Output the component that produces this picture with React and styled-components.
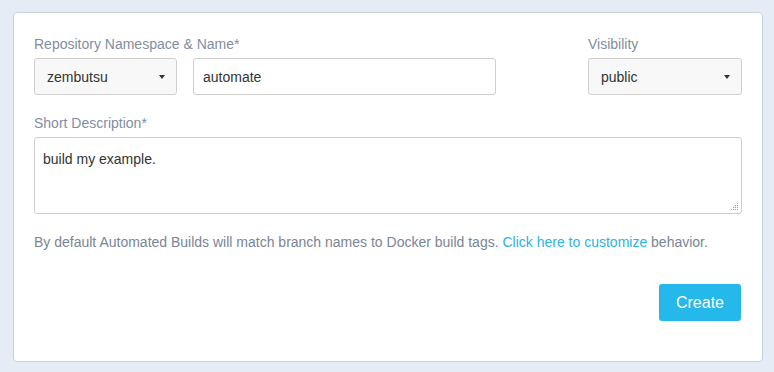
import React from 'react'
import styled, {createGlobalStyle} from 'styled-components'

const GlobalStyle = createGlobalStyle`
  html, body {
    margin: 0;
    background: #e6ecf5;
    font-family: "Liberation Sans", Arial, sans-serif;
  }
`

const Page = styled.div`
  padding: 12px 11px 10px 13px;
`

const Card = styled.div`
  background: #fff;
  border: 1px solid #c9d1dd;
  border-radius: 4px;
  padding: 21px 20px 40px 20px;
  height: 350px;
  box-sizing: border-box;
  display: flex;
  flex-direction: column;
`

const Row = styled.div`
  display: flex;
  align-items: flex-end;
`

const Field = styled.div`
  display: flex;
  flex-direction: column;
  margin-left: ${props => props.offset || '0'};
`

const Label = styled.label`
  font-size: 14px;
  line-height: 20px;
  color: #7f8ea3;
  margin-bottom: 4px;
  white-space: nowrap;
`

const Controls = styled.div`
  display: flex;
  gap: 16px;
`

const Select = styled.div`
  box-sizing: border-box;
  width: ${props => props.width};
  height: 37px;
  border: 1px solid #cfcfcf;
  border-radius: 3px;
  background: #f8f8f8;
  display: flex;
  align-items: center;
  justify-content: space-between;
  padding: 0 11px 0 12px;
  font-size: 14px;
  color: #333;
`

const Caret = styled.span`
  width: 0;
  height: 0;
  border-left: 3px solid transparent;
  border-right: 3px solid transparent;
  border-top: 4px solid #333;
`

const Input = styled.div`
  box-sizing: border-box;
  width: ${props => props.width};
  height: 37px;
  border: 1px solid #cfcfcf;
  border-radius: 3px;
  background: #fff;
  display: flex;
  align-items: center;
  padding: 0 9px;
  font-size: 14px;
  color: #333;
`

const TextArea = styled.div`
  position: relative;
  box-sizing: border-box;
  height: 77px;
  border: 1px solid #cfcfcf;
  border-radius: 3px;
  padding: 11px 8px;
  font-size: 14px;
  line-height: 20px;
  color: #333;
`

const Grip = styled.svg`
  position: absolute;
  right: 2px;
  bottom: 2px;
`

const Section = styled.div`
  display: flex;
  flex-direction: column;
  margin-top: 18px;
`

const Help = styled.p`
  margin: 18px 0 0;
  font-size: 14px;
  line-height: 20px;
  color: #7a8595;
`

const Link = styled.a`
  color: #2bb3e6;
  text-decoration: none;
`

const Footer = styled.div`
  margin-top: auto;
  display: flex;
  justify-content: flex-end;
  padding-right: 1px;
`

const Button = styled.button`
  width: 82px;
  height: 37px;
  border: none;
  border-radius: 3px;
  background: #24b8eb;
  color: #fff;
  font-family: "Liberation Sans", Arial, sans-serif;
  font-size: 16px;
  cursor: pointer;
`

const App = () => (
  <>
    <GlobalStyle />
    <Page>
      <Card>
        <Row>
          <Field>
            <Label>Repository Namespace &amp; Name*</Label>
            <Controls>
              <Select width="143px">
                zembutsu
                <Caret />
              </Select>
              <Input width="303px">automate</Input>
            </Controls>
          </Field>
          <Field offset="auto">
            <Label>Visibility</Label>
            <Select width="154px">
              public
              <Caret />
            </Select>
          </Field>
        </Row>
        <Section>
          <Label>Short Description*</Label>
          <TextArea>
            build my example.
            <Grip width="8" height="8" viewBox="0 0 8 8">
              <g fill="#9a9a9a">
                <rect x="6" y="0" width="1" height="1" />
                <rect x="4" y="2" width="1" height="1" />
                <rect x="6" y="2" width="1" height="1" />
                <rect x="2" y="4" width="1" height="1" />
                <rect x="4" y="4" width="1" height="1" />
                <rect x="6" y="4" width="1" height="1" />
                <rect x="0" y="6" width="1" height="1" />
                <rect x="2" y="6" width="1" height="1" />
                <rect x="4" y="6" width="1" height="1" />
                <rect x="6" y="6" width="1" height="1" />
              </g>
            </Grip>
          </TextArea>
        </Section>
        <Help>
          By default Automated Builds will match branch names to Docker build tags.{' '}
          <Link href="#">Click here to customize</Link> behavior.
        </Help>
        <Footer>
          <Button>Create</Button>
        </Footer>
      </Card>
    </Page>
  </>
)

export default App
